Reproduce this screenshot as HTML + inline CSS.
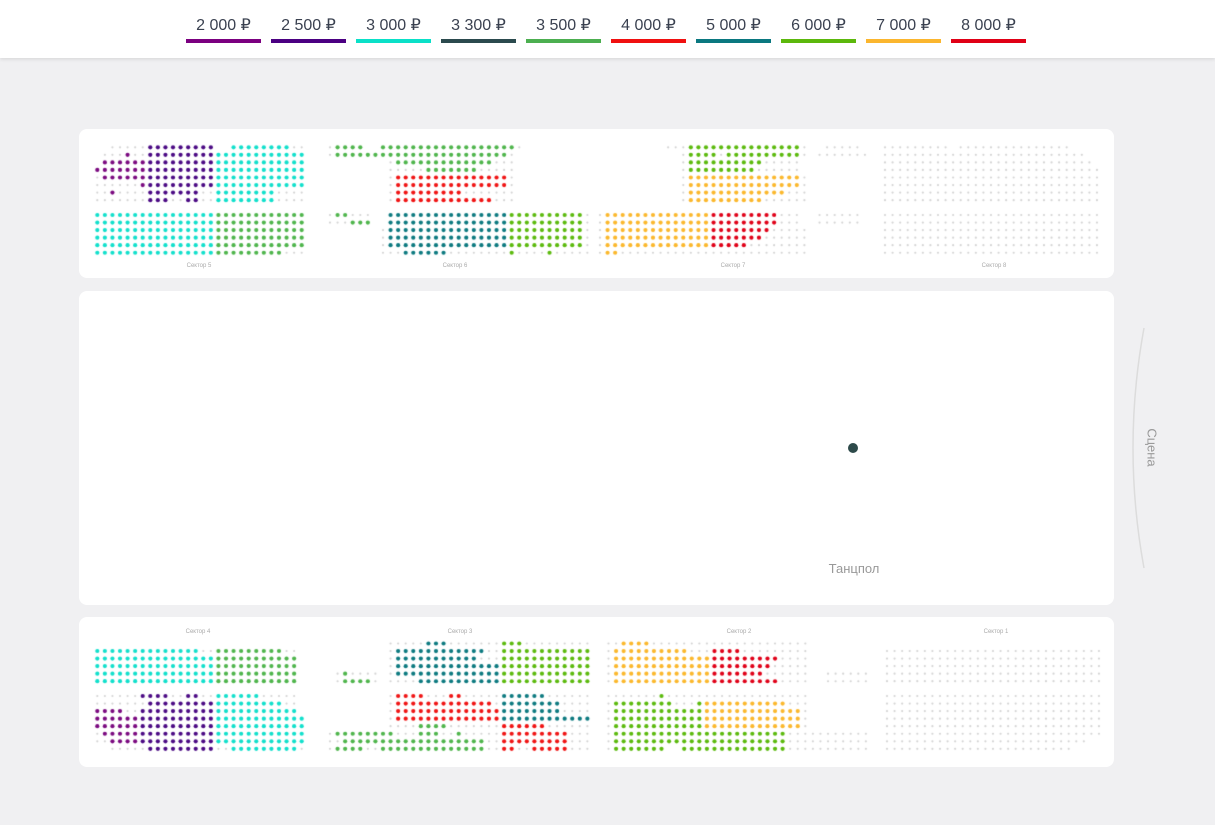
<!DOCTYPE html>
<html><head><meta charset="utf-8"><style>
html,body{margin:0;padding:0;}
body{width:1215px;height:825px;background:#f0f0f2;position:relative;overflow:hidden;font-family:"Liberation Sans",sans-serif;}
#hdr{position:absolute;left:0;top:0;width:1215px;height:58px;background:#fff;box-shadow:0 1px 4px rgba(0,0,0,0.12);}
.lg{position:absolute;top:16px;width:75px;text-align:center;font-size:16px;color:#3a4150;line-height:20px;}
.lg i{position:absolute;left:0;top:23px;width:75px;height:4px;display:block;}
.pn{position:absolute;left:79px;width:1035px;background:#fff;border-radius:8px;}
.sl{position:absolute;font-size:6px;color:#aaa;transform:translateX(-50%);}
canvas{position:absolute;left:0;top:0;}
</style></head><body>
<div id="hdr">
<div class="lg" style="left:186px">2 000 ₽<i style="background:#7b0080"></i></div>
<div class="lg" style="left:271px">2 500 ₽<i style="background:#4b0082"></i></div>
<div class="lg" style="left:356px">3 000 ₽<i style="background:#0ae0c8"></i></div>
<div class="lg" style="left:441px">3 300 ₽<i style="background:#2b4a4e"></i></div>
<div class="lg" style="left:526px">3 500 ₽<i style="background:#4caf50"></i></div>
<div class="lg" style="left:611px">4 000 ₽<i style="background:#f01010"></i></div>
<div class="lg" style="left:696px">5 000 ₽<i style="background:#0a7880"></i></div>
<div class="lg" style="left:781px">6 000 ₽<i style="background:#5cb80c"></i></div>
<div class="lg" style="left:866px">7 000 ₽<i style="background:#fbb62e"></i></div>
<div class="lg" style="left:951px">8 000 ₽<i style="background:#e00016"></i></div>
</div>
<div class="pn" style="top:129px;height:149px"></div>
<div class="pn" style="top:291px;height:314px"></div>
<div class="pn" style="top:617px;height:150px"></div>
<div class="sl" style="left:199px;top:263px">Сектор 5</div>
<div class="sl" style="left:455px;top:263px">Сектор 6</div>
<div class="sl" style="left:733px;top:263px">Сектор 7</div>
<div class="sl" style="left:994px;top:263px">Сектор 8</div>
<div class="sl" style="left:198px;top:629px">Сектор 4</div>
<div class="sl" style="left:460px;top:629px">Сектор 3</div>
<div class="sl" style="left:739px;top:629px">Сектор 2</div>
<div class="sl" style="left:996px;top:629px">Сектор 1</div>
<canvas id="c" width="1215" height="825"></canvas>
<div style="position:absolute;left:848px;top:443px;width:10px;height:10px;border-radius:50%;background:#2d4a4a"></div>
<div style="position:absolute;left:804px;top:561px;width:100px;text-align:center;font-size:13px;color:#999">Танцпол</div>
<svg style="position:absolute;left:0;top:0" width="1215" height="825"><path d="M1144 328 Q1122 448 1144 568" fill="none" stroke="#dcdcdc" stroke-width="1.5"/></svg>
<div style="position:absolute;left:1122px;top:440px;width:60px;text-align:center;font-size:13px;color:#999;transform:rotate(90deg)">Сцена</div>
<script>
var C={a:'#7b0a80',b:'#4b0a84',c:'#12e0cc',d:'#2b4a4e',e:'#4fb54c',f:'#f01414',g:'#0d7a80',h:'#5cba0e',i:'#fbb82d',j:'#e00018'};
var x=document.getElementById('c').getContext('2d');
function S(x0,y0,rows){for(var r=0;r<rows.length;r++){var s=rows[r];for(var k=0;k<s.length;k++){var ch=s[k];if(ch==' ')continue;var px=x0+7.57*k,py=y0+7.55*r;x.beginPath();if(ch=='.'){x.fillStyle='#d4d4d4';x.arc(px,py,1.1,0,7);}else{x.fillStyle=C[ch];x.arc(px,py,2.1,0,7);}x.fill();}}}
function rep(s,n){var a=[];for(var i=0;i<n;i++)a.push(s);return a;}
S(97.3,147.3,["  .....bbbbbbbbb  cccccccc..",
" ...a..bbbbbbbbbcccccccccccc",
" aaaaaabbbbbbbbbcccccccccccc",
"aaaaaaabbbbbbbbbcccccccccccc",
".aaaaaabbbbbbbbbcccccccccccc",
"......abbbbbbbbbcccccccccccc",
"..a....bbbbbbb..cccccccc....",
".......bbb..bb..cccccccc...."]);
S(97.3,215,rep("cccccccccccccccceeeeeeeeeeee",5).concat(["cccccccccccccccceeeeeeeee..."]));
S(330,147.3,[".eeee  eeeeeeeeeeeeeeeeee.",
".eeeeeeeeeeeeeeeeeeeeeee.",
"        .eeeeeeeeeeeee...",
"        .....eeeeeee.....",
"        .fffffffffffffff.",
"        .fffffffffffffff.",
"        .fffffffff.......",
"        .fffffffffffff..."]);
S(330,215,[".ee...  gggggggggggggggghhhhhhhhhh.",
"...eee  gggggggggggggggghhhhhhhhhh.",
"       .gggggggggggggggghhhhhhhhhh.",
"       .gggggggggggggggghhhhhhhhhh.",
"       .gggggggggggggggghhhhhhhhhh.",
"       ...gggggg........h....h....."]);
S(600,147.3,["         ...hhhhhhhhhhhhhhh.  .....",
"           .hhhh.hhhhhhhhhh. .......",
"           .hhhhhhhhhh.....",
"           .hhhhhhhhh......",
"           .iiiiiiiiiiiiiii.",
"           .iiiiiiiiiiiiiii.",
"           .iiiiiiiiiiiii...",
"           .iiiiiiiiii......"]);
S(600,215,[".iiiiiiiiiiiiiijjjjjjjjj...  ......",
".iiiiiiiiiiiiiijjjjjjjjj...  ......",
".iiiiiiiiiiiiiijjjjjjjj.....",
".iiiiiiiiiiiiiijjjjjjj......",
".iiiiiiiiiiiiiijjjjj........",
".ii........................."]);
S(885,147.3,["......... ...............",
"...........................",
"............................",
".............................",
".............................",
".............................",
".............................",
"............................."]);
S(885,215,rep(".............................",6));
S(97.3,651,["cccccccccccccc..eeeeeeeee..",
"cccccccccccccccceeeeeeeeeee",
"cccccccccccccccceeeeeeeeeee",
"cccccccccccccccceeeeeeeeeee",
"cccccccccccccccceeeeeeeeeee"]);
S(97.3,696,["......bbbb..bb..cccccc.....",
".......bbbbbbbbbccccccccc..",
"aaaa..bbbbbbbbbbccccccccccc",
"aaaaaabbbbbbbbbbcccccccccccc",
"aaaaaabbbbbbbbbbcccccccccccc",
".aaaaabbbbbbbbbbcccccccccccc",
"..aaaabbbbbbbbbbcccccccccccc",
"  .....bbbbbbbbb..ccccccccc."]);
S(330,643.5,["        .....ggg.......hhh.........",
"        .gggggggggggg..hhhhhhhhhhhh",
"        .ggggggggggg...hhhhhhhhhhhh",
"        .gggggggggggggghhhhhhhhhhhh",
" .e.... .gggggggggggggghhhhhhhhhhhh",
" .eeee. ....ggggggggggghhhhhhhhhhhh"]);
S(330,696,["        .ffff...ff.....gggggg......",
"        .fffffffffffff.gggggggg....",
"        .ffffffffffffffgggggggg....",
"        .ffffffffffffffgggggggggggg",
"        ....eeee.......ffffff......",
".eeeeeeee...eee..e.....fffffffff...",
"..eeeeeeeeeeeeeeeeeee..fffffffff...",
".eeee..eeeeeeeeeeeeee..ff..fffff..."]);
S(608.5,643.5,["..iiii.....................",
".iiiiiiiiii...jjjj.........",
".iiiiiiiiiiiiijjjjjjjjj....",
".iiiiiiiiiiiiijjjjjjjj.....",
".iiiiiiiiiiiiijjjjjjj......  ......",
".iiiiiiiiiiiiijjjjjjjjj....  ......"]);
S(608.5,696,[".......h...................",
".hhhhhhhh...hiiiiiiiiiii...",
".hhhhhhhhhhhhiiiiiiiiiiiii.",
".hhhhhhhhhhhhiiiiiiiiiiiii.",
".hhhhhhhhhhhhiiiiiiiiiiiii.",
".hhhhhhhhhhhhhhhhhhhhhhh...........",
".hhhhhhhhhhhhhhhhhhhhhhh...........",
".hhhhhhh  hhhhhhhhhhhhhh..........."]);
S(887,651,rep(".............................",5));
S(887,696,rep(".............................",6).concat(["...........................","........................."]));
</script>
</body></html>
